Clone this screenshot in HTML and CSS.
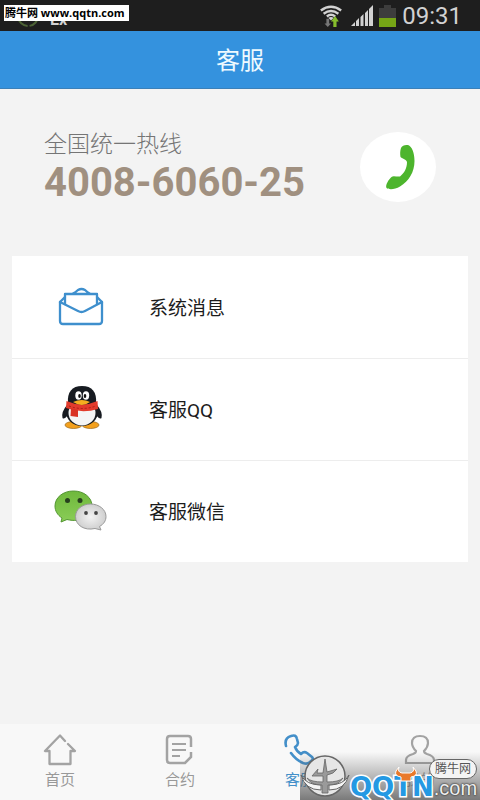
FILE: index.html
```html
<!DOCTYPE html>
<html lang="zh-CN">
<head>
    <meta charset="utf-8">
    <title>客服</title>
    <meta name="viewport" content="width=device-width, initial-scale=1.0">
    <link rel="stylesheet" href="styles.css">
</head>
<body>
    <div class="status-bar">
        <div class="status-left">
            <svg width="24" height="24" viewBox="0 0 24 24"><circle cx="12" cy="12" r="10" fill="none" stroke="#4d6336" stroke-width="2" stroke-dasharray="14 2"/></svg>
            <span class="carrier">Ex</span>
        </div>
        <svg class="wifi" width="24" height="24" viewBox="0 0 26 24">
            <g fill="none" stroke="#d2d2d2" stroke-width="2.600">
                <path d="M2 6Q13-2 24 6"/>
                <path d="M5 9.500Q13 3.500 21 9.500"/>
                <path d="M8.500 12.500Q13 9 17.500 12.500"/>
            </g>
            <path d="M10 14Q13 12 16 14L13 17z" fill="#d2d2d2"/>
            <path d="M8 15h3v5h2l-3.500 4L6 20h2z" fill="#777"/>
            <path d="M15.500 24v-6H13l4.500-6 4 6H19v6z" fill="#86bd2c"/>
        </svg>
        <svg class="signal" width="22" height="21" viewBox="0 0 22 21" fill="#d2d2d2">
            <path d="M0 21l4-4v4zM5 21v-5l3-3v8zM9.500 21v-9l3-3v12zM14 21V8l3-3v16zM18 21V4l4-4v21z"/>
        </svg>
        <svg class="battery" width="17" height="22" viewBox="0 0 17 22">
            <path d="M5 0h7v3h5v10H0V3h5z" fill="#3d3d3d"/>
            <path d="M0 13h17v9H0z" fill="#76a516"/>
        </svg>
        <span class="clock">09:31</span>
        <div class="site-tag">腾牛网 www.qqtn.com</div>
    </div>

    <header class="title-bar">
        <h1>客服</h1>
    </header>

    <main>
        <section class="hotline">
            <div class="hotline-text">
                <div class="hotline-label">全国统一热线</div>
                <div class="hotline-number">4008-6060-25</div>
            </div>
            <button class="call" type="button" aria-label="拨打热线">
                <svg width="30" height="46" viewBox="0 0 30 46"><path d="M16 4C17 1.500 20 .5 23 1C27 2.500 29.500 9 29.500 17C29.500 28 24 37 15 42.500C10 45.500 4 46 1.500 44C0 41 4 35 6.500 33C8 31.500 12 33 15 32.500C19.500 29 22 24 22 18C21 15 18 15 15.500 13C15 10 15 7 16 4z" fill="#4db52d"/></svg>
            </button>
        </section>

        <nav class="menu">
            <a class="menu-item" href="#message">
                <svg class="menu-icon" width="54" height="54" viewBox="0 0 54 54" fill="none" stroke="#3e8fcd" stroke-width="2.300" stroke-linejoin="round" stroke-linecap="round">
                    <path d="M11 18L6 23V42Q6 45 9 45H45Q48 45 48 42V23L43 18"/>
                    <path d="M6 23L24 32Q27.500 34 31 32L48 23"/>
                    <path d="M11 25V15H43V25M18 15Q22 13 24 11Q27.500 9 31 11Q33 13 36.500 15"/>
                </svg>
                <span>系统消息</span>
            </a>
            <a class="menu-item" href="#qq">
                <svg class="menu-icon" width="54" height="54" viewBox="0 1 54 54">
                    <g transform="translate(1 2)">
                        <ellipse cx="18.500" cy="42" rx="8.500" ry="3.500" fill="#f3a01d" stroke="#9a6515" stroke-width=".7"/>
                        <ellipse cx="35.500" cy="42" rx="8.500" ry="3.500" fill="#f3a01d" stroke="#9a6515" stroke-width=".7"/>
                        <path d="M12 22Q6 29 7.500 35Q9 37 13 32L41 32Q45 37 46.500 35Q48 29 42 22z" fill="#171b21"/>
                        <ellipse cx="27" cy="29" rx="16" ry="14" fill="#171b21"/>
                        <ellipse cx="27" cy="30" rx="13.500" ry="12.500" fill="#f4f5f6"/>
                        <path d="M13 20C12 9 17 3 27 3S42 9 41 20Q27 27 13 20z" fill="#171b21"/>
                        <ellipse cx="23.500" cy="12.500" rx="3.200" ry="4.200" fill="#fff"/>
                        <ellipse cx="31" cy="12.500" rx="3.200" ry="4.200" fill="#fff"/>
                        <ellipse cx="24.500" cy="13" rx="1.300" ry="2" fill="#111"/>
                        <ellipse cx="30" cy="13" rx="1.300" ry="2" fill="#111"/>
                        <path d="M11.500 18Q27 25 42.500 18L43 26Q27 31 11 25z" fill="#e23b2c"/>
                        <path d="M16 25L23 27V34L15.500 33z" fill="#d93225"/>
                        <path d="M14 23Q27 28 41 23" fill="none" stroke="#a81d18" stroke-dasharray="2 2"/>
                        <path d="M18 19Q27 15 35 19Q27 25 18 19z" fill="#f5ae20"/>
                    </g>
                </svg>
                <span>客服QQ</span>
            </a>
            <a class="menu-item" href="#wechat">
                <svg class="menu-icon" width="54" height="54" viewBox="0 0 54 54">
                    <defs>
                        <linearGradient id="green" x1="0" y1="0" x2="0" y2="1"><stop offset="0" stop-color="#6fb83c"/><stop offset="1" stop-color="#8acd57"/></linearGradient>
                        <radialGradient id="silver"><stop offset="0" stop-color="#f3f3f3"/><stop offset="1" stop-color="#cfcfcf"/></radialGradient>
                    </defs>
                    <path d="M19.500 7C9 7 1 13.500 1 22C1 27 3.500 31 8 34L7 38L13 35.500C27 39 38 32 38 22C38 13.500 30 7 19.500 7z" fill="url(#green)" stroke="#529630"/>
                    <path d="M36.500 20C28 20 21.500 25.500 21.500 32.500C21.500 41 30 47 41 44.500L47 46L45.500 42.500C50 40 52 36.500 52 32.500C52 25.500 45 20 36.500 20z" fill="url(#silver)" stroke="#999"/>
                    <g fill="#27401e"><circle cx="13.500" cy="16.500" r="2.500"/><circle cx="26" cy="16.500" r="2.500"/></g>
                    <g fill="#454545"><circle cx="32" cy="29" r="1.900"/><circle cx="42" cy="29" r="1.900"/></g>
                </svg>
                <span>客服微信</span>
            </a>
        </nav>
    </main>

    <footer class="tab-bar">
        <a class="tab" href="#home">
            <svg width="34" height="34" viewBox="0 0 34 34"><path d="M22 8L17 2.500L2 18H6.500V31H27.500V18H32L25 11" fill="none" stroke="#a3a3a3" stroke-width="2.300" stroke-linejoin="round" stroke-linecap="round"/></svg>
            <span>首页</span>
        </a>
        <a class="tab" href="#contract">
            <svg width="34" height="34" viewBox="0 0 34 34" fill="none" stroke="#a3a3a3" stroke-width="2.500"><path d="M28 14V6Q28 3 25 3H7Q4 3 4 6V27Q4 30 7 30H22L28 24V19"/><path d="M9 11H23M9 17H23M9 23H17" stroke-width="2"/></svg>
            <span>合约</span>
        </a>
        <a class="tab active" href="#service">
            <svg width="34" height="34" viewBox="0 0 34 34"><path d="M3 13Q1 5 8 3Q13 1 14 6L15 10Q15 12 12 14Q14 19 18 21Q21 18 24 20L29 24Q31 26 28 28Q25 32 20 30Q13 27 8 20" fill="none" stroke="#438fc9" stroke-width="2.600" stroke-linejoin="round" stroke-linecap="round"/></svg>
            <span>客服</span>
        </a>
        <a class="tab" href="#mine">
            <svg width="34" height="34" viewBox="0 0 34 34"><path d="M13 18C11 16 9 14 9 10Q9 3 17 3T25 10C25 14 23 16 21 18Q21 20 24 21Q31 23 31 27V30H3V27Q3 23 10 21Q13 20 13 18z" fill="none" stroke="#a3a3a3" stroke-width="2.200"/></svg>
            <span>我的</span>
        </a>
        <div class="watermark">
            <svg class="mark-logo" width="50" height="44" viewBox="0 0 50 44">
                <circle cx="25" cy="22" r="20" fill="#e6e6e6" stroke="#666" stroke-width="1.500"/>
                <path d="M1 21Q6 31 21 31V36Q5 36 1 21zM49 21Q44 31 29 31V36Q45 36 49 21z" fill="#f4f4f4" stroke="#666"/>
                <path d="M25 5L27 18L37 15Q34 20 27 21V28Q39 28 43 24Q39 31 28 31V39H22V31Q11 31 7 24Q11 28 23 28V22H12L18 15L17 19H23z" fill="#9a9a9a" stroke="#666" stroke-width=".8"/>
            </svg>
            <div class="mark-name">
                <span class="mark-letters">QQTN</span>
                <svg class="horns" width="24" height="16" viewBox="0 0 24 16"><path d="M5 1L2 5Q0 10 7 11V15H17V11Q24 10 22 5L19 1Q21 6 16 7H8Q3 6 5 1z" fill="#e9792b" stroke="#fff" stroke-width="1"/></svg>
            </div>
            <span class="mark-com">.com</span>
            <span class="mark-badge">腾牛网</span>
        </div>
    </footer>
</body>
</html>
```
FILE: styles.css
```css
* {
    box-sizing: border-box;
}

body {
    display: flex;
    flex-direction: column;
    min-height: 100vh;
    margin: 0;
    background-color: #f3f3f3;
    font-family: Roboto, "Noto Sans CJK SC", sans-serif;
}

a {
    color: inherit;
    text-decoration: none;
}

.status-bar {
    position: relative;
    display: flex;
    align-items: center;
    height: 31px;
    padding-right: 18px;
    background-color: #1e1e1e;
    color: #d2d2d2;
}

.status-left {
    display: flex;
    align-items: center;
    gap: 10px;
    margin-right: auto;
    padding-left: 16px;
}

.carrier {
    padding-top: 8px;
    font-size: 16px;
    font-weight: bold;
}

.wifi {
    margin-right: 8px;
}

.signal {
    margin-right: 6px;
}

.battery {
    margin-right: 6px;
}

.clock {
    font-size: 24px;
}

.site-tag {
    position: absolute;
    top: 5px;
    left: 4px;
    padding: 0 4px 0 1px;
    background-color: #fff;
    color: #000;
    font: bold 11px/16px "Open Sans", "Noto Sans CJK SC", sans-serif;
    white-space: nowrap;
}

.title-bar {
    display: flex;
    align-items: center;
    justify-content: center;
    height: 58px;
    padding-bottom: 2px;
    background-color: #3492de;
    border-bottom: 1px solid #3b80b8;
}

.title-bar h1 {
    margin: 0;
    color: #eefaff;
    font-size: 24px;
    font-weight: 400;
}

main {
    flex: 1;
    padding: 0 12px;
}

.hotline {
    display: flex;
    align-items: center;
    justify-content: space-between;
    height: 167px;
    padding: 0 32px 12px;
}

.hotline-label {
    color: #757575;
    font-size: 23px;
    font-weight: 300;
    line-height: 32px;
}

.hotline-number {
    color: #a09080;
    font-size: 40px;
    font-weight: bold;
    line-height: 44px;
}

.call {
    display: flex;
    align-items: center;
    justify-content: center;
    width: 76px;
    height: 70px;
    padding: 0 0 0 4px;
    border: 0;
    border-radius: 50%;
    background-color: #fff;
}

.menu {
    background-color: #fff;
}

.menu-item {
    display: flex;
    align-items: center;
    gap: 41px;
    height: 102px;
    padding: 0 0 2px 42px;
    color: #1c1c1c;
    font-size: 19px;
}

.menu-item + .menu-item {
    border-top: 1px solid #ededed;
}

.tab-bar {
    position: relative;
    display: flex;
    height: 76px;
    background-color: #f8f8f8;
}

.tab {
    display: flex;
    flex: 1;
    flex-direction: column;
    align-items: center;
    gap: 2px;
    padding-top: 9px;
    color: #999;
    font-size: 15px;
    line-height: 22px;
}

.tab.active {
    color: #438fc9;
}

/* site logo laid over the tab bar */
.watermark {
    position: absolute;
    right: 0;
    bottom: 0;
    display: flex;
    align-items: flex-end;
    width: 180px;
    height: 48px;
    background: linear-gradient(rgba(90, 90, 90, 0), rgba(90, 90, 90, 0.8));
}

.mark-logo {
    flex: none;
    margin-bottom: 2px;
}

.mark-name {
    position: relative;
    color: #2499e3;
    font: bold 26px/26px "DejaVu Sans", sans-serif;
}

.mark-letters {
    -webkit-text-stroke: 3px #fff;
    paint-order: stroke fill;
}

.horns {
    position: absolute;
    top: -8px;
    left: 44px;
}

.mark-com {
    color: #eee;
    font: 20px/24px "Liberation Sans", sans-serif;
    text-shadow: 0 0 2px #333, 0 0 2px #333;
}

.mark-badge {
    position: absolute;
    top: 7px;
    right: 3px;
    padding: 0 5px;
    border: 1px solid #666;
    border-radius: 10px;
    background-color: #f4f4f4;
    color: #555;
    font-size: 12px;
    line-height: 18px;
}
```
